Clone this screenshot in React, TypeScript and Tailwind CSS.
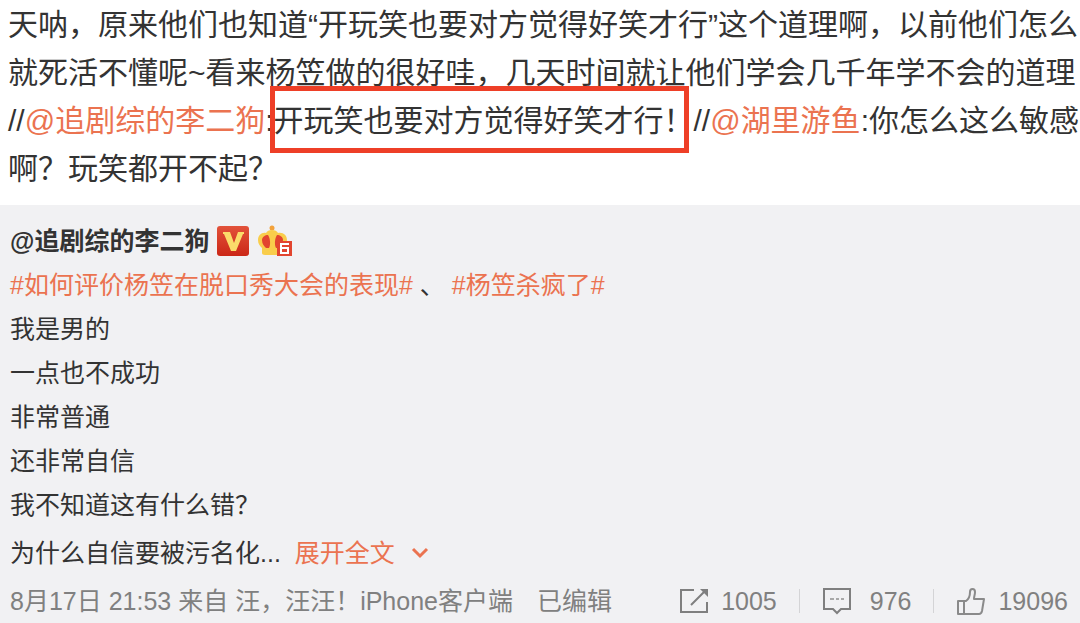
import React from "react";

interface ActionProps {
  label: string;
  count: string;
  children: React.ReactNode;
  className?: string;
}

const bodyLines = ["我是男的", "一点也不成功", "非常普通", "还非常自信", "我不知道这有什么错？"];

const Mention: React.FC<{ name: string }> = ({ name }) => (
  <a href="#user" className="text-[#eb7350]">
    @{name}
  </a>
);

const Topic: React.FC<{ name: string }> = ({ name }) => (
  <a href="#topic" className="text-[#eb7350]">
    #{name}#
  </a>
);

const VerifiedBadge = () => (
  <svg width="32" height="30" viewBox="0 0 32 30" role="img" aria-label="verified">
    <defs>
      <linearGradient id="badge" x1="0" y1="0" x2="0" y2="1">
        <stop offset="0" stopColor="#e2523a" />
        <stop offset="1" stopColor="#cb2717" />
      </linearGradient>
    </defs>
    <rect width="32" height="30" rx="3" fill="url(#badge)" />
    <path d="M6 6h7l4 11 4-11h6v2h-1L19 25h-5L7 8H6z" fill="#fbdc6a" />
  </svg>
);

const CrownBadge = () => (
  <svg width="36" height="32" viewBox="0 0 36 32" role="img" aria-label="member">
    <circle cx="15" cy="3" r="2.500" fill="#f3a23b" />
    <path
      d="M15 5c3 0 5 1 6 3 5-1 9 2 9 7 0 4-2 6-4 8v5c0 1-1 2-3 2H8c-2 0-3-1-3-2v-5c-2-2-4-4-4-8 0-5 4-8 8-7 1-2 3-3 6-3z"
      fill="#f9cd4b"
    />
    <path d="M11 10c2 3 3 9 1 13H9c-2-2-4-4-4-8 0-3 3-5 6-5z" fill="#e2452f" />
    <path d="M20 10c-2 3-3 9-1 13h3c2-2 4-4 4-8 0-3-3-5-6-5z" fill="#e2452f" />
    <rect x="20" y="16" width="15" height="15" fill="#e2452f" />
    <path d="M32 19h-8v9h7v-5h-7" fill="none" stroke="#fff" strokeWidth="2" />
  </svg>
);

const ShareIcon = () => (
  <svg width="30" height="26" viewBox="0 0 30 26" fill="none" stroke="#7f7f7f" strokeWidth="2">
    <path d="M15 2H2v22h26V14M12 17L26 3" />
    <path d="M21 1h8v8z" fill="#7f7f7f" stroke="none" />
  </svg>
);

const CommentIcon = () => (
  <svg width="30" height="28" viewBox="0 0 30 28" fill="none" stroke="#7f7f7f" strokeWidth="2">
    <path d="M2 2h26v20h-9l-4 4-4-4H2z" />
    <path d="M8 12h4m2 0h3m2 0h3" stroke="#a8a8a8" />
  </svg>
);

const LikeIcon = () => (
  <svg
    width="30"
    height="29"
    viewBox="0 0 30 29"
    fill="none"
    stroke="#8a8a8a"
    strokeWidth="2"
    strokeLinejoin="round"
  >
    <path d="M2 14h6v13H2zM8 14h2c3-2 4-5 4-9 0-4 5-4 5 0 0 3-1 4-1 7h10l-2 12c-.5 2-1 3-3 3H8" />
  </svg>
);

const Action: React.FC<ActionProps> = ({ label, count, children, className = "gap-3" }) => (
  <button type="button" aria-label={`${label} ${count}`} className={`flex cursor-pointer items-center ${className}`}>
    {children}
    <span>{count}</span>
  </button>
);

export default function App() {
  return (
    <article className="min-h-screen overflow-hidden bg-[#f1f1f3] font-['Liberation_Sans','Noto_Sans_CJK_SC',sans-serif] text-[25px] leading-[44px] whitespace-nowrap text-[#333]">
      <p className="bg-white pt-px pb-3 pl-2 text-[30px] leading-[48px]">
        天呐，原来他们也知道“开玩笑也要对方觉得好笑才行”这个道理啊，以前他们怎么
        <br />
        就死活不懂呢~看来杨笠做的很好哇，几天时间就让他们学会几千年学不会的道理
        <br />
        //
        <Mention name="追剧综的李二狗" />:
        <span className="relative">
          开玩笑也要对方觉得好笑才行！
          <span className="absolute -top-[18px] right-1 -bottom-4 -left-[3px] border-[5px] border-[#ee3f27]" />
        </span>
        //
        <Mention name="湖里游鱼" />
        :你怎么这么敏感
        <br />
        啊？玩笑都开不起？
      </p>

      <section className="px-[10px] pt-[14px]">
        <header className="flex items-center gap-2">
          <a href="#user" className="font-bold">
            @追剧综的李二狗
          </a>
          <VerifiedBadge />
          <CrownBadge />
        </header>
        <p>
          <Topic name="如何评价杨笠在脱口秀大会的表现" /> 、 <Topic name="杨笠杀疯了" />
        </p>
        {bodyLines.map((line) => (
          <p key={line}>{line}</p>
        ))}
        <p className="flex items-center leading-[52px]">
          为什么自信要被污名化...
          <button type="button" className="ml-[14px] flex cursor-pointer items-center gap-4 text-[#eb7350]">
            展开全文
            <svg width="18" height="12" viewBox="0 0 18 12" fill="none" stroke="#eb7350" strokeWidth="3">
              <path d="M2 2l7 7 7-7" />
            </svg>
          </button>
        </p>
        <footer className="flex items-center justify-between text-[#808080]">
          <div>
            <a href="#post">8月17日 21:53</a> 来自 <a href="#source">汪，汪汪！iPhone客户端</a>
            <span className="ml-6">已编辑</span>
          </div>
          <div className="flex items-center gap-[22px] pr-[2px]">
            <Action label="转发" count="1005">
              <ShareIcon />
            </Action>
            <span className="h-6 w-px bg-[#d4d4d6]" />
            <Action label="评论" count="976" className="gap-[18px]">
              <CommentIcon />
            </Action>
            <span className="h-6 w-px bg-[#d4d4d6]" />
            <Action label="赞" count="19096">
              <LikeIcon />
            </Action>
          </div>
        </footer>
      </section>
    </article>
  );
}
